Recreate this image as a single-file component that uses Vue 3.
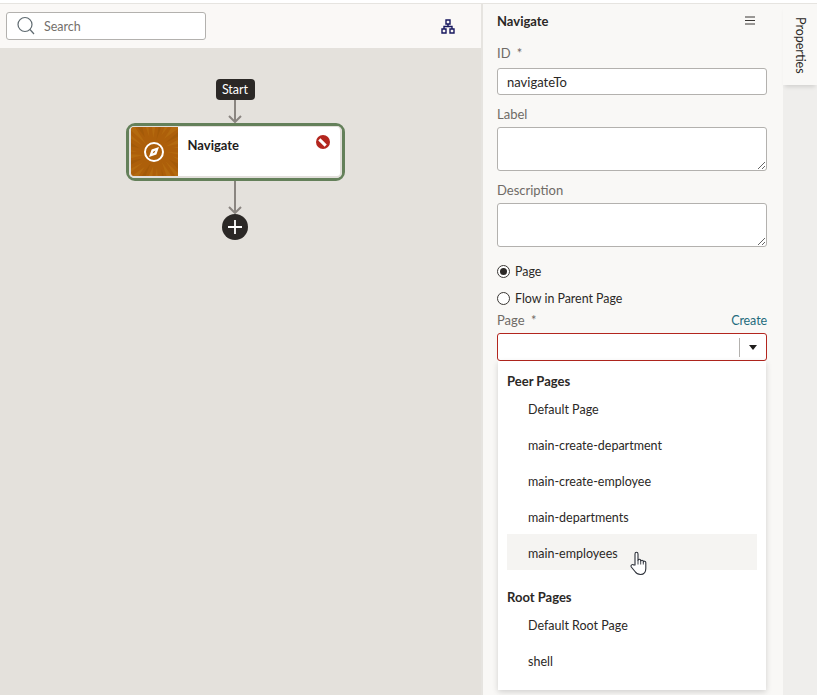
<template>
  <div class="page">
    <div class="left">
      <div class="toolbar">
        <div class="search">
          <svg class="search-icon" width="18" height="20" viewBox="0 0 18 20">
            <circle cx="8" cy="8.5" r="7" fill="none" stroke="#5f6a70" stroke-width="1.2" />
            <path d="M13 13.5l4 4.5" stroke="#5f6a70" stroke-width="1.2" fill="none" />
          </svg>
          <input class="search-input" type="text" placeholder="Search" />
        </div>
        <svg class="tree-icon" width="14" height="15" viewBox="0 0 14 15">
          <path d="M5 1h4v4H5zM1 10h4v4H1zM9 10h4v4H9zM7 5v2.500M3 10V7.500h8V10" fill="none" stroke="#17175f" stroke-width="1.400" />
        </svg>
      </div>
      <div class="canvas">
        <div class="start">Start</div>
        <svg class="arrow" width="16" height="23" viewBox="0 0 16 23">
          <path d="M8 0v22M2 16l6 6 6-6" fill="none" stroke="#8a8580" stroke-width="2" />
        </svg>
        <div class="node">
          <div class="node-inner">
            <div class="tile">
              <svg class="rays" width="47" height="50" viewBox="0 0 47 50">
                <path v-for="w in wedges" :key="w.d" :d="w.d" :fill="w.fill" />
              </svg>
              <svg class="compass" width="22" height="22" viewBox="0 0 22 22">
                <circle cx="11" cy="11" r="9" fill="none" stroke="#fff" stroke-width="2" />
                <path d="M16 6l-2.600 7.400L6 16l2.600-7.400z" fill="#fff" />
                <path d="M12.500 9.500l-1 2-2 1 1-2z" fill="#ad5f0a" />
              </svg>
            </div>
            <div class="node-title">Navigate</div>
            <div class="node-error"></div>
          </div>
        </div>
        <svg class="arrow" width="16" height="33" viewBox="0 0 16 33">
          <path d="M8 0v32M2 26l6 6 6-6" fill="none" stroke="#8a8580" stroke-width="2" />
        </svg>
        <div class="add">
          <svg width="16" height="16" viewBox="0 0 16 16">
            <path d="M8 1v14M1 8h14" stroke="#fff" stroke-width="1.800" />
          </svg>
        </div>
      </div>
    </div>

    <div class="panel">
      <div class="panel-head">
        <span class="panel-title">Navigate</span>
        <svg width="10" height="9" viewBox="0 0 10 9">
          <path d="M0 1h10M0 4.500h10M0 8h10" stroke="#3a3734" stroke-width="1" />
        </svg>
      </div>

      <label class="field-label first">ID <span class="star">*</span></label>
      <input class="text-input" type="text" value="navigateTo" />

      <label class="field-label label-gap">Label</label>
      <textarea class="area"></textarea>

      <label class="field-label desc-gap">Description</label>
      <textarea class="area"></textarea>

      <div class="radio-row radio-first">
        <span class="radio checked"></span>
        <span>Page</span>
      </div>
      <div class="radio-row radio-second">
        <span class="radio"></span>
        <span>Flow in Parent Page</span>
      </div>

      <div class="page-label-row">
        <label class="field-label">Page <span class="star">*</span></label>
        <span class="create">Create</span>
      </div>
      <div class="select">
        <span class="select-sep"></span>
        <span class="select-caret"></span>
      </div>

      <div class="dropdown">
        <div v-for="group in groups" :key="group.title" class="group">
          <div class="group-title">{{ group.title }}</div>
          <div
            v-for="item in group.items"
            :key="item"
            class="item"
            :class="{ hover: item === 'main-employees' }"
          >
            {{ item }}
          </div>
        </div>
        <svg class="cursor" width="18" height="25" viewBox="0 0 18 25">
          <path
            d="M5 14V3c0-2.300 3-2.300 3 0v6.500c0-1.600 2.700-1.600 2.700 0v.8c0-1.500 2.600-1.500 2.600 0v.9c0-1.400 2.500-1.400 2.500.2v6.100c0 3.500-2 6-5.300 6-2.700 0-4.200-1-5.500-3L1.300 16c-1-1.700 1.200-3.300 2.500-2z"
            fill="#fff"
            stroke="#2b2f38"
            stroke-width="1.100"
            stroke-linejoin="round"
          />
          <path d="M8 9.500v4M10.700 10.300v3.200M13.300 11.200v2.300" stroke="#2b2f38" stroke-width="0.900" fill="none" />
        </svg>
      </div>
    </div>

    <div class="rail">
      <div class="rail-tab"><span>Properties</span></div>
    </div>
  </div>
</template>

<script setup>
const groups = [
  {
    title: 'Peer Pages',
    items: ['Default Page', 'main-create-department', 'main-create-employee', 'main-departments', 'main-employees'],
  },
  {
    title: 'Root Pages',
    items: ['Default Root Page', 'shell'],
  },
]

// uneven sunburst texture on the node tile
const wedges = []
const steps = 26
for (let i = 0; i < steps; i++) {
  const a = (i / steps) * Math.PI * 2
  const spread = 0.07 + ((i * 7) % 5) * 0.012
  const inner = 12 + ((i * 3) % 4) * 2
  const x0 = 24 + Math.cos(a) * inner
  const y0 = 25 + Math.sin(a) * inner
  const x1 = 24 + Math.cos(a + 0.1 - spread) * 44
  const y1 = 25 + Math.sin(a + 0.1 - spread) * 44
  const x2 = 24 + Math.cos(a + 0.1 + spread) * 44
  const y2 = 25 + Math.sin(a + 0.1 + spread) * 44
  wedges.push({
    d: `M${x0.toFixed(1)} ${y0.toFixed(1)}L${x1.toFixed(1)} ${y1.toFixed(1)}L${x2.toFixed(1)} ${y2.toFixed(1)}Z`,
    fill: i % 3 === 2 ? '#a35a08' : '#b46a0f',
  })
}
</script>

<style>
html,
body {
  margin: 0;
  background: #fff;
}
</style>

<style scoped>
.page {
  width: 817px;
  height: 695px;
  display: flex;
  overflow: hidden;
  box-sizing: border-box;
  padding-top: 3px;
  position: relative;
  font-family: Lato, "Liberation Sans", sans-serif;
  font-size: 13px;
  color: #2b2826;
  background: linear-gradient(#fff 3px, #e6e4e0 3px, #e6e4e0 4px, #fff 4px);
}
.left {
  width: 481px;
  display: flex;
  flex-direction: column;
  margin-top: 1px;
}
.toolbar {
  height: 44px;
  background: #faf8f6;
  display: flex;
  align-items: center;
  justify-content: space-between;
  padding: 0 26px 0 6px;
  box-sizing: border-box;
}
.search {
  width: 200px;
  height: 28px;
  box-sizing: border-box;
  background: #fff;
  border: 1px solid #b3b1ae;
  border-radius: 3px;
  display: flex;
  align-items: center;
  padding-left: 10px;
  gap: 9px;
}
.search-input {
  border: 0;
  outline: 0;
  padding: 0;
  width: 140px;
  font: inherit;
  font-size: 12.500px;
  background: transparent;
}
.search-input::placeholder {
  color: #74706b;
  opacity: 1;
}
.canvas {
  flex: 1;
  background: #e4e1dc;
  display: flex;
  flex-direction: column;
  align-items: center;
  padding-top: 31px;
  padding-right: 11px;
}
.start {
  height: 21px;
  width: 39px;
  background: #2b2826;
  border-radius: 4px;
  color: #fff;
  font-size: 12.500px;
  line-height: 21px;
  text-align: center;
}
.arrow {
  display: block;
}
.node {
  width: 219px;
  height: 58px;
  box-sizing: border-box;
  border: 3px solid #64805a;
  border-radius: 9px;
  background: #fff;
}
.node-inner {
  height: 100%;
  box-sizing: border-box;
  border: 2px solid #e2dfdb;
  border-top-width: 1px;
  border-radius: 5px;
  display: flex;
  position: relative;
}
.tile {
  width: 47px;
  flex: none;
  background: #ad5f0a;
  position: relative;
  display: flex;
  align-items: center;
  justify-content: center;
  overflow: hidden;
  border-radius: 3px 0 0 3px;
}
.rays {
  position: absolute;
  left: 0;
  top: 0;
}
.compass {
  position: relative;
}
.node-title {
  font-weight: 700;
  font-size: 13px;
  margin: 10px 0 0 10px;
  color: #1f1d1b;
}
.node-error {
  position: absolute;
  top: 8px;
  right: 10px;
  width: 14px;
  height: 14px;
  border-radius: 50%;
  background: #b3261e;
  overflow: hidden;
}
.node-error::after {
  content: "";
  position: absolute;
  left: 2.500px;
  top: 5.500px;
  width: 9px;
  height: 3px;
  background: #fff;
  transform: rotate(45deg);
}
.add {
  width: 26px;
  height: 26px;
  border-radius: 50%;
  background: #2b2826;
  display: flex;
  align-items: center;
  justify-content: center;
}
.panel {
  width: 302px;
  flex: none;
  box-sizing: border-box;
  background: #f9f8f6;
  border-left: 2px solid #e6e4e0;
  padding: 1px 16px 0 14px;
  margin-top: 1px;
}
.panel-head {
  display: flex;
  align-items: center;
  justify-content: space-between;
  height: 31px;
  padding-right: 12px;
}
.panel-title {
  font-weight: 700;
  font-size: 13px;
}
.field-label {
  display: block;
  color: #6f6b66;
  font-size: 13px;
  line-height: 16px;
}
.first {
  margin-top: 9px;
  margin-bottom: 7px;
}
.label-gap {
  margin-top: 11px;
  margin-bottom: 5px;
}
.desc-gap {
  margin-top: 11px;
  margin-bottom: 5px;
}
.star {
  margin-left: 3px;
}
.text-input,
.area {
  display: block;
  width: 270px;
  box-sizing: border-box;
  background: #fff;
  border: 1px solid #b3b1ae;
  border-radius: 3px;
  font: inherit;
  color: #2b2826;
  outline: 0;
}
.text-input {
  height: 27px;
  padding: 0 9px;
}
.area {
  height: 44px;
  margin: 0;
  padding: 4px 9px;
  resize: vertical;
}
.radio-row {
  display: flex;
  align-items: center;
  gap: 5px;
  height: 16px;
  font-size: 12.400px;
}
.radio-first {
  margin-top: 16px;
}
.radio-second {
  margin-top: 11px;
}
.radio {
  width: 13px;
  height: 13px;
  box-sizing: border-box;
  border: 1px solid #3a3734;
  border-radius: 50%;
  background: #fff;
  display: flex;
  align-items: center;
  justify-content: center;
}
.radio.checked::after {
  content: "";
  width: 7px;
  height: 7px;
  border-radius: 50%;
  background: #2b2826;
}
.page-label-row {
  display: flex;
  justify-content: space-between;
  align-items: center;
  margin-top: 6px;
  margin-bottom: 5px;
  height: 16px;
}
.create {
  color: #1f6b7d;
  font-size: 12.500px;
  letter-spacing: -0.1px;
}
.select {
  width: 270px;
  height: 28px;
  box-sizing: border-box;
  background: #fff;
  border: 1px solid #b3261e;
  border-radius: 3px;
  display: flex;
  align-items: center;
  justify-content: flex-end;
  padding-right: 9px;
}
.select-sep {
  width: 1px;
  height: 19px;
  background: #b3b1ae;
  margin-right: 9px;
}
.select-caret {
  width: 0;
  height: 0;
  border-left: 4.500px solid transparent;
  border-right: 4.500px solid transparent;
  border-top: 5px solid #1f1d1b;
}
.dropdown {
  width: 268px;
  height: 329px;
  margin-left: 1px;
  box-sizing: border-box;
  background: #fff;
  box-shadow: 0 2px 6px rgba(0, 0, 0, 0.16);
  padding: 11px 9px 0;
  position: relative;
}
.group + .group {
  margin-top: 18px;
}
.group-title {
  font-weight: 700;
  font-size: 13px;
  line-height: 18px;
  color: #2b2826;
}
.item {
  height: 36px;
  line-height: 40px;
  padding-left: 21px;
  width: 250px;
  box-sizing: border-box;
  font-size: 12.500px;
}
.item.hover {
  background: #f5f4f2;
}
.cursor {
  position: absolute;
  left: 132px;
  top: 190px;
}
.rail {
  flex: 1;
  background: #efeeec;
  margin-top: 1px;
}
.rail-tab {
  height: 81px;
  background: #f9f8f6;
  box-shadow: 0 4px 4px -2px rgba(0, 0, 0, 0.12);
  display: flex;
  justify-content: center;
  padding-top: 13px;
  box-sizing: border-box;
}
.rail-tab span {
  writing-mode: vertical-rl;
  font-size: 12.500px;
}
</style>
